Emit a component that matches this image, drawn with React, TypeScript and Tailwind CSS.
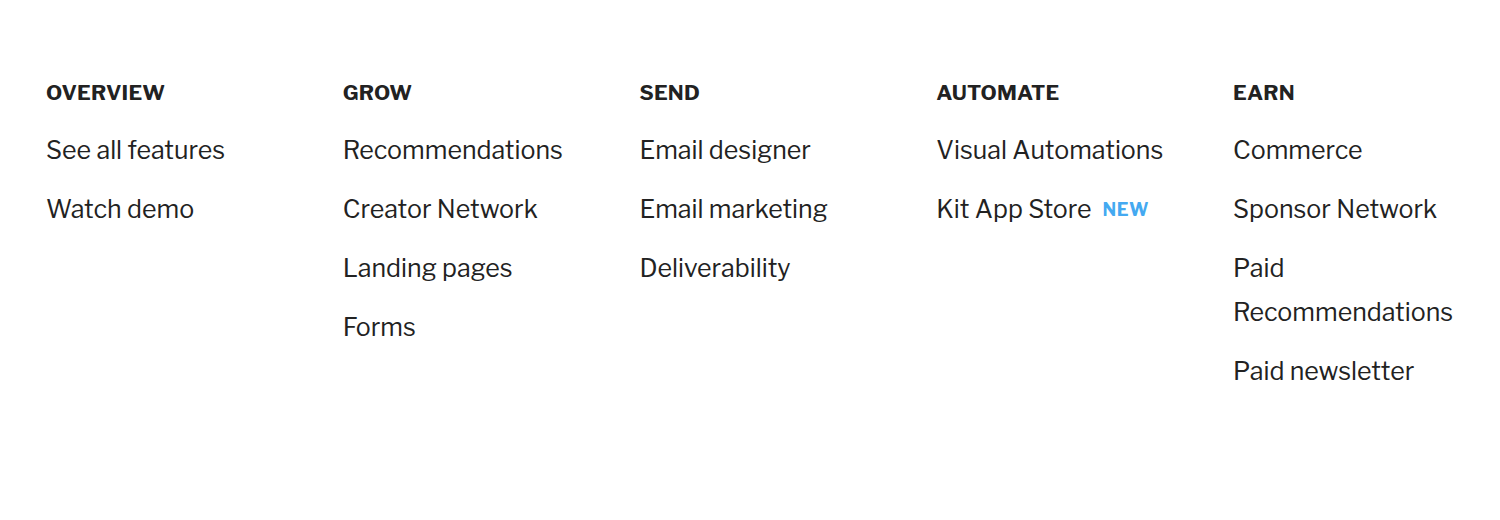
import React from 'react';

type Item = { label: string; badge?: string };

const COLUMNS: { title: string; items: Item[] }[] = [
  { title: 'Overview', items: [{ label: 'See all features' }, { label: 'Watch demo' }] },
  {
    title: 'Grow',
    items: [
      { label: 'Recommendations' },
      { label: 'Creator Network' },
      { label: 'Landing pages' },
      { label: 'Forms' },
    ],
  },
  {
    title: 'Send',
    items: [{ label: 'Email designer' }, { label: 'Email marketing' }, { label: 'Deliverability' }],
  },
  {
    title: 'Automate',
    items: [{ label: 'Visual Automations' }, { label: 'Kit App Store', badge: 'NEW' }],
  },
  {
    title: 'Earn',
    items: [
      { label: 'Commerce' },
      { label: 'Sponsor Network' },
      { label: 'Paid Recommendations' },
      { label: 'Paid newsletter' },
    ],
  },
];

export default function App() {
  return (
    <div
      className="w-full h-[520px] bg-white text-[#222222] pl-[46px] pt-[79px]"
      style={{ fontFamily: '"Libre Franklin", Inter, "Noto Sans", sans-serif' }}
    >
      <div className="grid grid-cols-[250px_250px_250px_250px_250px] gap-x-[46.75px]">
        {COLUMNS.map((col) => (
          <div key={col.title} className="flex flex-col">
            <h3 className="text-[21px] font-bold uppercase leading-[28px] tracking-[0.2px] mb-[21px]">
              {col.title}
            </h3>
            <ul className="flex flex-col gap-[15px]">
              {col.items.map((item) => (
                <li key={item.label} className="text-[25px] leading-[44px] font-normal">
                  <a href="#" className="hover:text-black">
                    {item.label}
                  </a>
                  {item.badge && (
                    <span className="ml-[11px] text-[18px] font-bold text-[#44a9f1] tracking-[0.5px] align-[2px]">
                      {item.badge}
                    </span>
                  )}
                </li>
              ))}
            </ul>
          </div>
        ))}
      </div>
    </div>
  );
}
